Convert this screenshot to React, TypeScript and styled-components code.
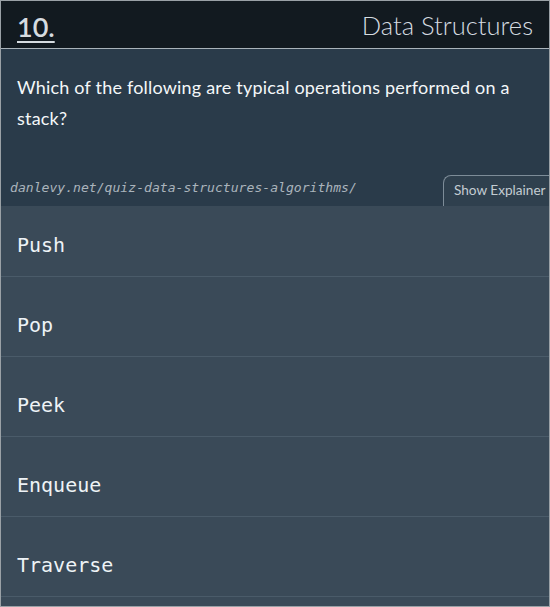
import styled, { createGlobalStyle } from "styled-components";

const GlobalStyle = createGlobalStyle`
  html, body {
    margin: 0;
    padding: 0;
    background: #ffffff;
  }
  * {
    box-sizing: border-box;
  }
`;

const options = ["Push", "Pop", "Peek", "Enqueue", "Traverse"];

const App = () => {
    return (
        <>
            <GlobalStyle />
            <Card>
                <Header>
                    <Number>10.</Number>
                    <Category>Data Structures</Category>
                </Header>
                <Question>
                    <Prompt>
                        Which of the following are typical operations performed on a stack?
                    </Prompt>
                    <Footer>
                        <SourceLink>danlevy.net/quiz-data-structures-algorithms/</SourceLink>
                        <ExplainerTab>Show Explainer</ExplainerTab>
                    </Footer>
                </Question>
                <OptionList>
                    {options.map((o, i) => (
                        <Option key={o} first={i === 0}>{o}</Option>
                    ))}
                </OptionList>
            </Card>
        </>
    );
};

export default App;

const Card = styled.div`
    width: 550px;
    height: 607px;
    border: 1px solid #9aa1a6;
    background: #3a4a58;
    display: flex;
    flex-direction: column;
    overflow: hidden;
`

const Header = styled.header`
    height: 48px;
    flex-shrink: 0;
    background: #121a20;
    border-bottom: 1px solid #a9b3ba;
    display: flex;
    align-items: center;
    justify-content: space-between;
    padding: 0 16px 0 16px;
    font-family: "Lato", "Open Sans", sans-serif;
`

const Number = styled.span`
    font-size: 27px;
    font-weight: 600;
    color: #d6dce0;
    text-decoration: underline;
    text-underline-offset: 4px;
    text-decoration-thickness: 2px;
    margin-top: 3px;
`

const Category = styled.span`
    font-size: 25.5px;
    font-weight: 300;
    color: #d6dce0;
`

const Question = styled.section`
    height: 157px;
    flex-shrink: 0;
    background: #2a3b4a;
    display: flex;
    flex-direction: column;
    justify-content: space-between;
`

const Prompt = styled.p`
    margin: 0;
    padding: 23px 30px 0 16px;
    font-family: "Lato", "Open Sans", sans-serif;
    font-size: 18px;
    letter-spacing: 0.2px;
    line-height: 31px;
    color: #f4f7f9;
`

const Footer = styled.div`
    display: flex;
    align-items: flex-end;
    justify-content: space-between;
`

const SourceLink = styled.span`
    font-family: "DejaVu Sans Mono", monospace;
    font-style: italic;
    font-size: 13.1px;
    color: #aab4bc;
    padding: 0 0 11px 9px;
`

const ExplainerTab = styled.button`
    background: #2f404e;
    border: 1px solid #7d8c98;
    border-bottom: none;
    border-right: none;
    border-radius: 8px 0 0 0;
    color: #c3ccd2;
    font-family: "Lato", "Open Sans", sans-serif;
    font-size: 13.6px;
    height: 31px;
    width: 106px;
    padding: 0 4px 2px 10px;
    text-align: left;
    white-space: nowrap;
    cursor: pointer;
`

const OptionList = styled.ul`
    list-style: none;
    margin: 0;
    padding: 0;
    display: flex;
    flex-direction: column;
`

const Option = styled.li<{ first?: boolean }>`
    height: ${(p) => (p.first ? "71px" : "80px")};
    flex-shrink: 0;
    border-bottom: 1px solid #4a5b69;
    display: flex;
    align-items: center;
    padding: ${(p) => (p.first ? "8px" : "17px")} 16px 0 16px;
    font-family: "DejaVu Sans Mono", monospace;
    font-size: 20px;
    color: #eef3f6;
`
